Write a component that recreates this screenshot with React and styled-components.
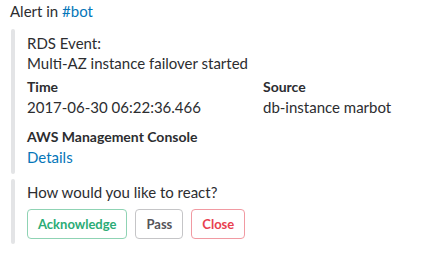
import React from "react";
import styled, { createGlobalStyle } from "styled-components";

const GlobalStyle = createGlobalStyle`
  body {
    margin: 0;
    background: #fff;
    font-family: Lato, "Liberation Sans", sans-serif;
    color: #2c2d30;
  }
`;

const Message = styled.div`
  padding: 0 10px;
  font-size: 15px;
  line-height: 22px;
`;

const Link = styled.a`
  color: #0576b9;
  text-decoration: none;
`;

const Attachment = styled.div`
  display: flex;
  margin-top: ${props => props.$gap || 0}px;
`;

const Bar = styled.div`
  width: 4px;
  flex: none;
  background: #e3e4e6;
  border-radius: 2px;
  margin-left: 1px;
`;

const Body = styled.div`
  padding: ${props => props.$pad || "4px 0 7px 12px"};
  display: flex;
  flex-direction: column;
`;

const Line = styled.div`
  line-height: 20px;
`;

const Fields = styled.div`
  display: grid;
  grid-template-columns: 236px 1fr;
  margin-top: 4px;
`;

const Field = styled.div`
  display: flex;
  flex-direction: column;
  margin-bottom: ${props => props.$mb || 0}px;
`;

const FieldTitle = styled.div`
  font-weight: 700;
  font-size: 14px;
  line-height: 20px;
`;

const Actions = styled.div`
  display: flex;
  gap: 8px;
  margin-top: 7px;
`;

const tones = {
  primary: { color: "#2bac76", border: "#8fd3b4" },
  default: { color: "#555459", border: "#c5c5c7" },
  danger: { color: "#e8404f", border: "#f19aa2" },
};

const Button = styled.button`
  height: 30px;
  padding: 0 10px;
  background: #fff;
  border: 1px solid ${props => tones[props.$tone].border};
  border-radius: 4px;
  color: ${props => tones[props.$tone].color};
  font-family: Lato, "Liberation Sans", sans-serif;
  font-weight: 700;
  font-size: 13px;
  cursor: pointer;
`;

export default function App() {
  return (
    <>
      <GlobalStyle />
      <Message>
        <div>
          Alert in <Link href="#">#bot</Link>
        </div>
        <Attachment $gap={7}>
          <Bar />
          <Body>
            <Line>RDS Event:</Line>
            <Line>Multi-AZ instance failover started</Line>
            <Fields>
              <Field $mb={10}>
                <FieldTitle>Time</FieldTitle>
                <Line>2017-06-30 06:22:36.466</Line>
              </Field>
              <Field $mb={10}>
                <FieldTitle>Source</FieldTitle>
                <Line>db-instance marbot</Line>
              </Field>
              <Field>
                <FieldTitle>AWS Management Console</FieldTitle>
                <Line>
                  <Link href="#">Details</Link>
                </Line>
              </Field>
            </Fields>
          </Body>
        </Attachment>
        <Attachment $gap={5}>
          <Bar />
          <Body $pad="3px 0 5px 12px">
            <Line>How would you like to react?</Line>
            <Actions>
              <Button $tone="primary">Acknowledge</Button>
              <Button $tone="default">Pass</Button>
              <Button $tone="danger">Close</Button>
            </Actions>
          </Body>
        </Attachment>
      </Message>
    </>
  );
}
